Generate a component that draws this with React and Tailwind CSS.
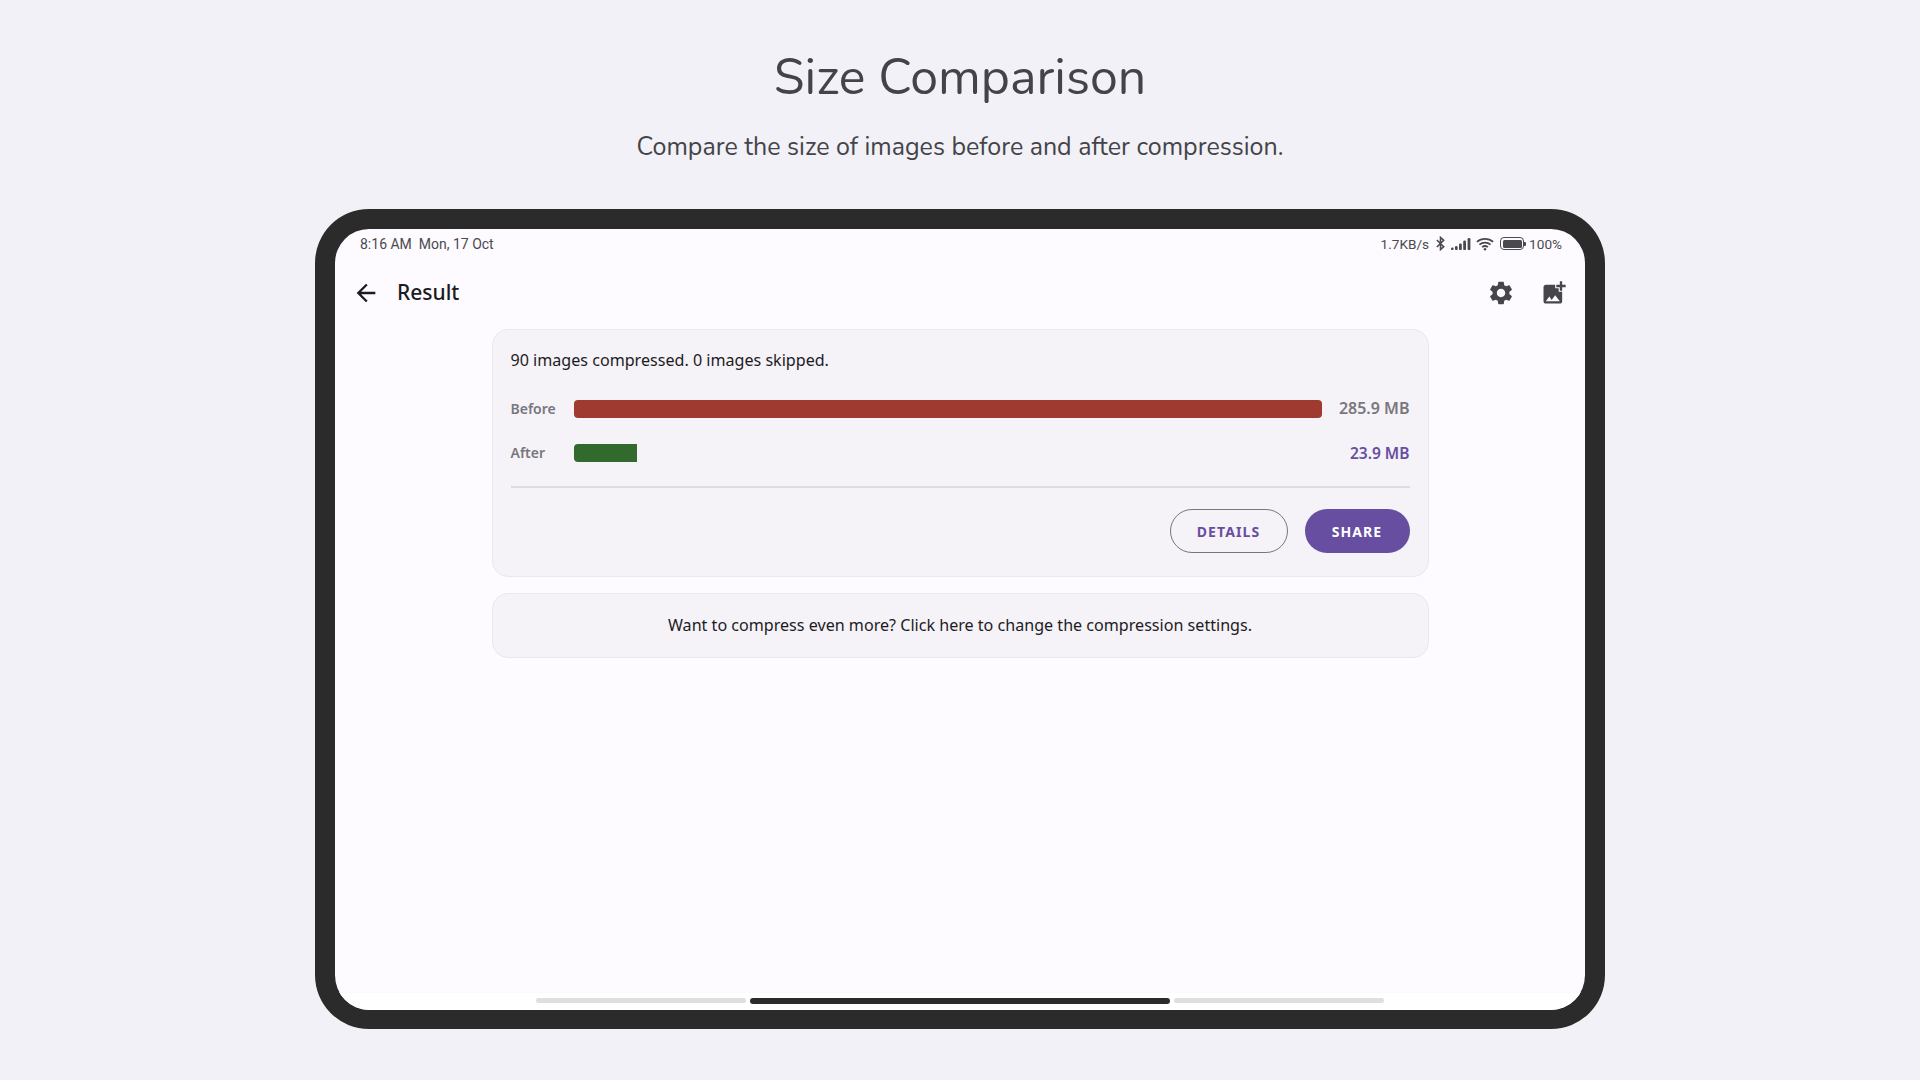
const settingsPath =
  'M19.14 12.94c.04-.3.06-.61.06-.94 0-.32-.02-.64-.07-.94l2.03-1.58c.18-.14.23-.41.12-.61l-1.92-3.32c-.12-.22-.37-.29-.59-.22l-2.39.96c-.5-.38-1.03-.7-1.62-.94l-.36-2.54c-.04-.24-.24-.41-.48-.41h-3.84c-.24 0-.43.17-.47.41l-.36 2.54c-.59.24-1.13.57-1.62.94l-2.39-.96c-.22-.08-.47 0-.59.22L2.74 8.87c-.12.21-.08.47.12.61l2.03 1.58c-.05.3-.09.63-.09.94s.02.64.07.94l-2.03 1.58c-.18.14-.23.41-.12.61l1.92 3.32c.12.22.37.29.59.22l2.39-.96c.5.38 1.03.7 1.62.94l.36 2.54c.05.24.24.41.48.41h3.84c.24 0 .44-.17.47-.41l.36-2.54c.59-.24 1.13-.56 1.62-.94l2.39.96c.22.08.47 0 .59-.22l1.92-3.32c.12-.22.07-.47-.12-.61l-2.01-1.58zM12 15.6c-1.98 0-3.6-1.62-3.6-3.6s1.62-3.6 3.6-3.6 3.6 1.62 3.6 3.6-1.62 3.6-3.6 3.6z';
const addPhotoPath =
  'M19 7v2.99s-1.99.01-2 0V7h-3s.01-1.99 0-2h3V2h2v3h3v2h-3zm-3 4V8h-3V5H5c-1.1 0-2 .9-2 2v12c0 1.1.9 2 2 2h12c1.1 0 2-.9 2-2v-8h-3zM5 19l3-4 2 3 3-4 4 5H5z';
const backPath = 'M20 11H7.83l5.59-5.59L12 4l-8 8 8 8 1.41-1.41L7.83 13H20v-2z';

function MaterialIcon({ d, className }) {
  return (
    <svg viewBox="0 0 24 24" className={className} fill="currentColor">
      <path d={d} />
    </svg>
  );
}

function StatusIcons() {
  return (
    <div className="flex items-center text-[#4a4a4e]">
      {/* Bluetooth */}
      <svg viewBox="0 0 12 16" className="w-[11px] h-[15px] ml-[6px]" fill="none" stroke="currentColor" strokeWidth="1.7">
        <path d="M2 4.2l7.5 7.2L6 14.6V1.4l3.5 3.2L2 11.8" />
      </svg>
      {/* Signal */}
      <svg viewBox="0 0 20 14" className="w-[20px] h-[14px] ml-[5px]" fill="currentColor">
        <rect x="0" y="10.5" width="2.6" height="2.6" rx="1.2" />
        <rect x="4" y="9" width="2.6" height="4.1" rx="1.2" />
        <rect x="8" y="6.5" width="2.8" height="6.6" rx="1.2" />
        <rect x="12.2" y="3.5" width="2.8" height="9.6" rx="1.2" />
        <rect x="16.6" y="1" width="2.8" height="12.1" rx="1.2" />
      </svg>
      {/* Wifi */}
      <svg viewBox="0 0 20 15" className="w-[18px] h-[14px] ml-[5px]" fill="none" stroke="currentColor" strokeWidth="2">
        <path d="M1 5.2c5-4.4 13-4.4 18 0M3.8 8.2c3.4-3 9-3 12.4 0M6.8 11c1.8-1.5 4.6-1.5 6.4 0" />
        <circle cx="10" cy="13.4" r="1.4" fill="currentColor" stroke="none" />
      </svg>
      {/* Battery */}
      <div className="flex items-center ml-[6px]">
        <div className="w-[24px] h-[13px] rounded-[4px] border-[1.5px] border-[#4a4a4e] p-[1.5px]">
          <div className="w-full h-full rounded-[1.5px] bg-[#4a4a4e]" />
        </div>
        <div className="w-[2px] h-[4px] bg-[#4a4a4e] rounded-r-[1px]" />
      </div>
    </div>
  );
}

function Card({ className, children }) {
  return (
    <div className={`w-[937px] bg-[#f5f2f8] border border-[#eae8ed] rounded-[16px] ${className}`}>
      {children}
    </div>
  );
}

export default function App() {
  return (
    <div className="min-h-screen h-[1080px] overflow-hidden bg-[#f1f1f7] flex flex-col items-center font-['Noto_Sans',sans-serif]">
      <h1 className="mt-[43px] text-[50px] leading-[70px] font-normal text-[#444448] font-['Nunito','Lato',sans-serif]">
        Size Comparison
      </h1>
      <p className="mt-[17px] text-[25px] leading-[34px] text-[#444448] font-['Nunito','Lato',sans-serif]">
        Compare the size of images before and after compression.
      </p>

      {/* Tablet frame */}
      <div className="mt-[45px] w-[1290px] h-[820px] bg-[#fdfbff] border-[20px] border-b-[19px] border-[#2b2b2b] rounded-[54px] flex flex-col overflow-hidden">
        {/* Status bar */}
        <div className="h-[30px] flex items-center justify-between pl-[25px] pr-[23px] font-['Roboto',sans-serif] text-[14px] text-[#4a4a4e]">
          <span className="whitespace-pre">8:16 AM  Mon, 17 Oct</span>
          <div className="flex items-center text-[13.6px]">
            <span>1.7KB/s</span>
            <StatusIcons />
            <span className="ml-[3px]">100%</span>
          </div>
        </div>

        {/* App bar */}
        <div className="h-[67px] flex items-center pl-[17px] pr-[17px] text-[#1c1b1f]">
          <MaterialIcon d={backPath} className="w-[28px] h-[28px]" />
          <h2 className="ml-[17px] text-[21px] font-medium">Result</h2>
          <div className="ml-auto flex items-center gap-[25px] text-[#45454b]">
            <MaterialIcon d={settingsPath} className="w-[28px] h-[28px]" />
            <MaterialIcon d={addPhotoPath} className="w-[28px] h-[28px]" />
          </div>
        </div>

        {/* Content */}
        <div className="mt-[3px] flex-1 flex flex-col items-center gap-[16px]">
          <Card className="h-[248px] pt-[18px] px-[18px]">
            <p className="text-[16.1px] leading-[24px] text-[#1c1b1f]">90 images compressed. 0 images skipped.</p>

            <div className="mt-[28px] flex items-center h-[18px] text-[14px] font-semibold text-[#78777e]">
              <span className="w-[63px] mb-[1px]">Before</span>
              <div className="flex-1 h-[18px] rounded-[4px] bg-[#9f3a30]" />
              <span className="w-[88px] text-right text-[16px] mb-[2px]">285.9 MB</span>
            </div>

            <div className="mt-[26px] flex items-center h-[18px] text-[14px] font-semibold">
              <span className="w-[63px] mb-[1px] text-[#78777e]">After</span>
              <div className="flex-1 h-[18px]">
                <div className="w-[63px] h-full rounded-l-[4px] bg-[#316a2c]" />
              </div>
              <span className="w-[88px] text-right text-[15.5px] mt-[2px] text-[#674ea0]">23.9 MB</span>
            </div>

            <div className="mt-[24px] h-[2px] bg-[#dddbe1]" />

            <div className="mt-[21px] flex justify-end gap-[17px]">
              <button className="w-[118px] h-[44px] rounded-full border-[1.5px] border-[#77767c] text-[14px] font-bold tracking-[1.1px] text-[#674ea0]">
                DETAILS
              </button>
              <button className="w-[105px] h-[44px] rounded-full bg-[#674ea0] text-[14px] font-bold tracking-[1.1px] text-white">
                SHARE
              </button>
            </div>
          </Card>

          <Card className="h-[65px] flex items-center justify-center">
            <p className="text-[16.1px] text-[#1c1b1f]">
              Want to compress even more? Click here to change the compression settings.
            </p>
          </Card>
        </div>

        {/* Gesture bar */}
        <div className="h-[18px] bg-white border-t border-[#fbf7fb] flex justify-center items-start pt-[5px] gap-[4px]">
          <div className="w-[210px] h-[5px] rounded-full bg-[#dfdfdf]" />
          <div className="w-[420px] h-[6px] rounded-full bg-[#2b2b2b]" />
          <div className="w-[210px] h-[5px] rounded-full bg-[#dfdfdf]" />
        </div>
      </div>
    </div>
  );
}
